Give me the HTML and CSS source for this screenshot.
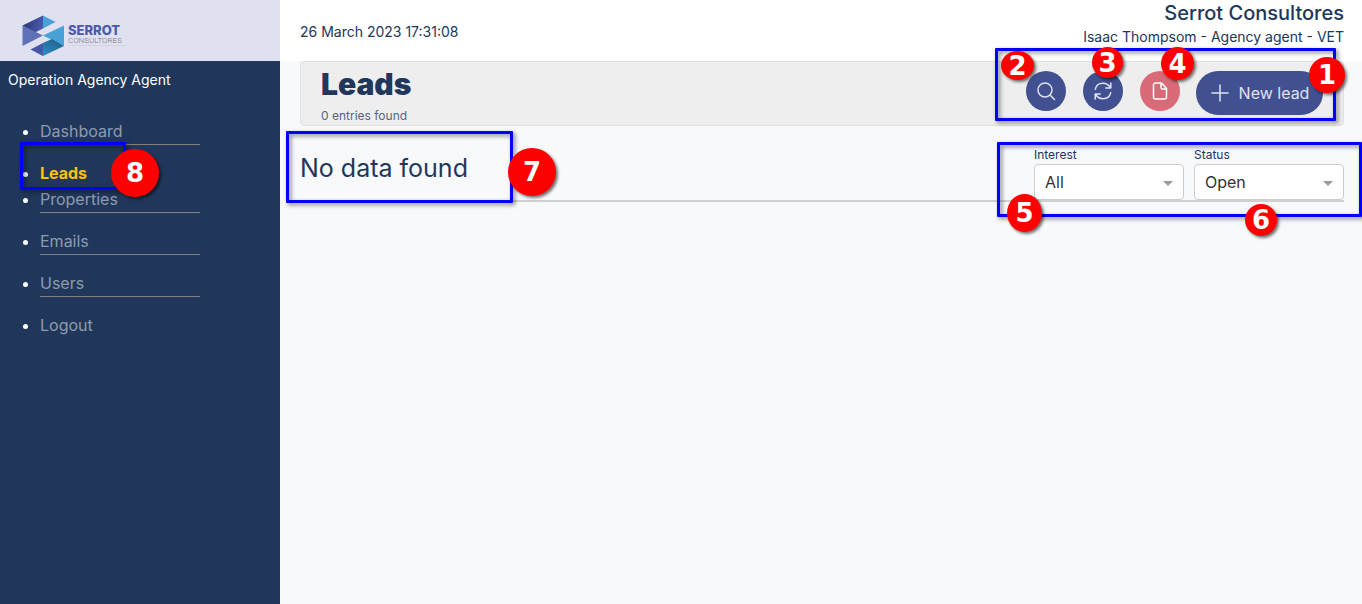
FILE: index.html
```html
<!DOCTYPE html>
<html lang="en">
<head>
<meta charset="utf-8">
<title>Leads</title>
<link rel="stylesheet" href="styles.css">
</head>
<body>
<div class="app">
  <aside class="sidebar">
    <div class="brand">
      <svg class="brand-mark" viewBox="0 0 42 42" aria-hidden="true">
        <defs>
          <linearGradient id="g1" x1="0" y1="0.3" x2="1" y2="0.5"><stop offset="0" stop-color="#2b3474"/><stop offset="1" stop-color="#4a5aad"/></linearGradient>
          <linearGradient id="g2" x1="0.2" y1="1" x2="0.8" y2="0"><stop offset="0" stop-color="#2f8cc4"/><stop offset="1" stop-color="#1c5f86"/></linearGradient>
        </defs>
        <path d="M21 0.5V13.500L12 18L0.5 10.5Z" fill="url(#g1)"/>
        <path d="M21 0.500L33.500 7L21 13.500Z" fill="#48a2d8"/>
        <path d="M0.500 10.500L21 20.500L0.500 31Z" fill="#5e71b7"/>
        <path d="M42 10.500V31L21 20.500Z" fill="#48a2d8"/>
        <path d="M30 24L42 31L21 41V28Z" fill="url(#g2)"/>
        <path d="M21 28V41L8.500 34.500Z" fill="#4657a6"/>
      </svg>
      <div class="brand-text">
        <span class="brand-name">SERROT</span>
        <span class="brand-sub">CONSULTORES</span>
      </div>
    </div>
    <p class="role">Operation Agency Agent</p>
    <nav>
      <ul class="menu">
        <li><a href="#dashboard">Dashboard</a></li>
        <li class="active"><a href="#leads">Leads</a></li>
        <li><a href="#properties">Properties</a></li>
        <li><a href="#emails">Emails</a></li>
        <li><a href="#users">Users</a></li>
        <li class="last"><a href="#logout">Logout</a></li>
      </ul>
    </nav>
  </aside>
  <div class="page">
    <header class="topbar">
      <time class="clock">26 March 2023 17:31:08</time>
      <div class="account">
        <div class="company">Serrot Consultores</div>
        <div class="user">Isaac Thompsom - Agency agent - VET</div>
      </div>
    </header>
    <main class="content">
      <section class="title-card">
        <div class="title-text">
          <h1>Leads</h1>
          <p>0 entries found</p>
        </div>
        <div class="actions">
          <button class="round" type="button" aria-label="Search">
            <svg class="icon" viewBox="0 0 20 20"><circle cx="9" cy="9" r="7"/><path d="M14 14l4.500 4.500"/></svg>
          </button>
          <button class="round" type="button" aria-label="Refresh">
            <svg class="icon" viewBox="0 0 20 20"><path d="M2.300 8.300C3 4.500 6.300 2.300 10 2.300c3 0 5.500 1.300 7.300 4.200M17.800 2v5h-5M17.700 11.700C17 15.500 13.700 17.700 10 17.700c-3 0-5.500-1.300-7.300-4.200M2.200 18v-5h5"/></svg>
          </button>
          <button class="round danger" type="button" aria-label="Document">
            <svg class="icon" viewBox="0 0 20 20"><path d="M5.500 2h6L16.500 7.500V16a2 2 0 0 1-2 2h-9a2 2 0 0 1-2-2V4a2 2 0 0 1 2-2ZM11 2v4.500a1.500 1.500 0 0 0 1.500 1.500h4"/></svg>
          </button>
          <button class="new-lead" type="button">
            <svg class="icon plus" viewBox="0 0 20 20"><path d="M10 2v16M2 10h16"/></svg>
            <span>New lead</span>
          </button>
        </div>
      </section>
      <section class="list-head">
        <h2>No data found</h2>
        <div class="filters">
          <div class="field">
            <label for="interest">Interest</label>
            <div class="select-wrap"><select id="interest"><option>All</option></select></div>
          </div>
          <div class="field">
            <label for="status">Status</label>
            <div class="select-wrap"><select id="status"><option>Open</option></select></div>
          </div>
        </div>
      </section>
    </main>
  </div>
  <div class="mark frame frame-actions"></div>
  <div class="mark frame frame-filters"></div>
  <div class="mark frame frame-empty"></div>
  <div class="mark frame frame-menu"></div>
  <div class="mark badge badge-1">1</div>
  <div class="mark badge badge-2">2</div>
  <div class="mark badge badge-3">3</div>
  <div class="mark badge badge-4">4</div>
  <div class="mark badge badge-5">5</div>
  <div class="mark badge badge-6">6</div>
  <div class="mark badge badge-7">7</div>
  <div class="mark badge badge-8">8</div>
</div>
</body>
</html>
```
FILE: styles.css
```css
* { box-sizing: border-box; }
body {
  margin: 0;
  font-family: Inter, "Liberation Sans", sans-serif;
  color: #20375b;
  background: #f8f9fb;
}
h1, h2, p { margin: 0; }

.app {
  position: relative;
  display: grid;
  grid-template-columns: 280px minmax(0, 1fr);
  min-height: 100vh;
  overflow: hidden;
}

/* Sidebar */
.sidebar { background: #20375b; color: #fff; }
.brand {
  display: flex;
  align-items: flex-start;
  gap: 4px;
  height: 61px;
  padding: 15px 22px 0;
  background: #e0e1f0;
}
.brand-mark { width: 42px; height: 42px; }
.brand-text {
  display: flex;
  flex-direction: column;
  width: 60px;
  margin-top: 8px;
  font-family: "Liberation Sans", Arial, sans-serif;
  border-bottom: 1px solid #d3d4e2;
}
.brand-name { font-family: Inter, sans-serif; font-size: 13px; line-height: 14px; font-weight: 800; color: #4a5bad; }
.brand-sub { font-family: Roboto, sans-serif; font-weight: 300; font-size: 8px; line-height: 8px; color: #777782; }
.role { padding: 9px 8px 0; font-size: 14px; line-height: 20px; }
.menu { margin: 29px 80px 0 0; padding: 0 0 0 40px; font-size: 16px; line-height: 25px; }
.menu li { margin-bottom: 16px; border-bottom: 1px solid #808080; }
.menu a { color: #8f9bad; text-decoration: none; }
.menu .active { margin-bottom: 0; border-color: transparent; }
.menu .active a { color: #ffc107; font-weight: 700; }
.menu .last { border-color: transparent; }

/* Top bar */
.topbar {
  display: flex;
  justify-content: space-between;
  align-items: center;
  height: 61px;
  padding: 0 18px 0 20px;
  background: #fff;
}
.clock { font-size: 14px; line-height: 20px; padding-top: 2px; }
.account { text-align: right; padding-bottom: 14px; }
.company { font-size: 20px; line-height: 26px; font-weight: 500; }
.user { font-size: 14px; line-height: 22px; }

/* Title card */
.content { padding: 0 18px 0 20px; }
.title-card {
  display: flex;
  justify-content: space-between;
  height: 65px;
  padding: 4px 20px 0;
  background: #eee;
  border: 1px solid #dee2e6;
  border-radius: 4px;
}
h1 { font-size: 30px; line-height: 36px; font-weight: 900; }
.title-text p { margin-top: 5px; font-size: 12px; line-height: 18px; color: #56657f; }
.actions { display: flex; gap: 17px; padding-top: 5px; }
.round, .new-lead {
  display: flex;
  align-items: center;
  justify-content: center;
  padding: 0;
  border: 0;
  background: #405091;
  color: #e0e1f0;
  font: inherit;
}
.round { width: 40px; height: 40px; border-radius: 50%; }
.danger { background: #d86b77; color: #fff; }
.new-lead { gap: 9px; width: 127px; height: 44px; margin-left: -1px; border-radius: 22px; font-size: 16px; }
.icon {
  width: 20px;
  height: 20px;
  fill: none;
  stroke: currentColor;
  stroke-width: 1.5;
  stroke-linecap: round;
  stroke-linejoin: round;
}

/* List header */
.list-head {
  display: flex;
  justify-content: space-between;
  align-items: flex-start;
  height: 76px;
  padding-top: 20px;
  border-bottom: 2px solid #d0d0d0;
}
h2 { padding-top: 6px; font-size: 25px; line-height: 32px; font-weight: 400; }
.filters { display: flex; gap: 10px; }
.field { width: 150px; }
.field label { display: block; font-size: 12px; line-height: 18px; }
.select-wrap { position: relative; }
.select-wrap::after {
  content: "";
  position: absolute;
  top: 17px;
  right: 11px;
  border: 5px solid transparent;
  border-top-color: #999;
  border-bottom: 0;
  pointer-events: none;
}
select {
  display: block;
  width: 100%;
  height: 36px;
  padding: 0 10px;
  appearance: none;
  background: #fff;
  border: 1px solid #ccc;
  border-radius: 4px;
  color: #333;
  font: inherit;
  font-size: 16px;
}

/* Numbered callouts laid over the page */
.mark { position: absolute; pointer-events: none; }
.frame { border: 3px solid #00f; border-radius: 1px; filter: drop-shadow(2px 2px 2px rgba(0, 0, 0, 0.5)); }
.frame-actions { top: 48px; right: 26px; width: 341px; height: 73px; }
.frame-filters { top: 142px; right: 0; width: 365px; height: 75px; }
.frame-empty { top: 131px; left: 286px; width: 227px; height: 72px; }
.frame-menu { top: 142px; left: 20px; width: 106px; height: 48px; }
.badge {
  display: grid;
  place-items: center;
  background: #f00;
  border-radius: 50%;
  color: #fff;
  font: 700 26px/26px "DejaVu Sans", sans-serif;
  box-shadow: 2px 2px 3px rgba(0, 0, 0, 0.55);
}
.badge-1 { top: 57px; right: 17px; width: 36px; height: 36px; }
.badge-2 { top: 51px; right: 328px; width: 33px; height: 29px; }
.badge-3 { top: 47px; right: 239px; width: 31px; height: 31px; }
.badge-4 { top: 47px; right: 168px; width: 33px; height: 33px; }
.badge-5 { top: 194px; right: 320px; width: 35px; height: 38px; }
.badge-6 { top: 204px; right: 85px; width: 32px; height: 32px; }
.badge-7 { top: 148px; left: 508px; width: 48px; height: 48px; }
.badge-8 { top: 149px; left: 111px; width: 48px; height: 48px; }
```
